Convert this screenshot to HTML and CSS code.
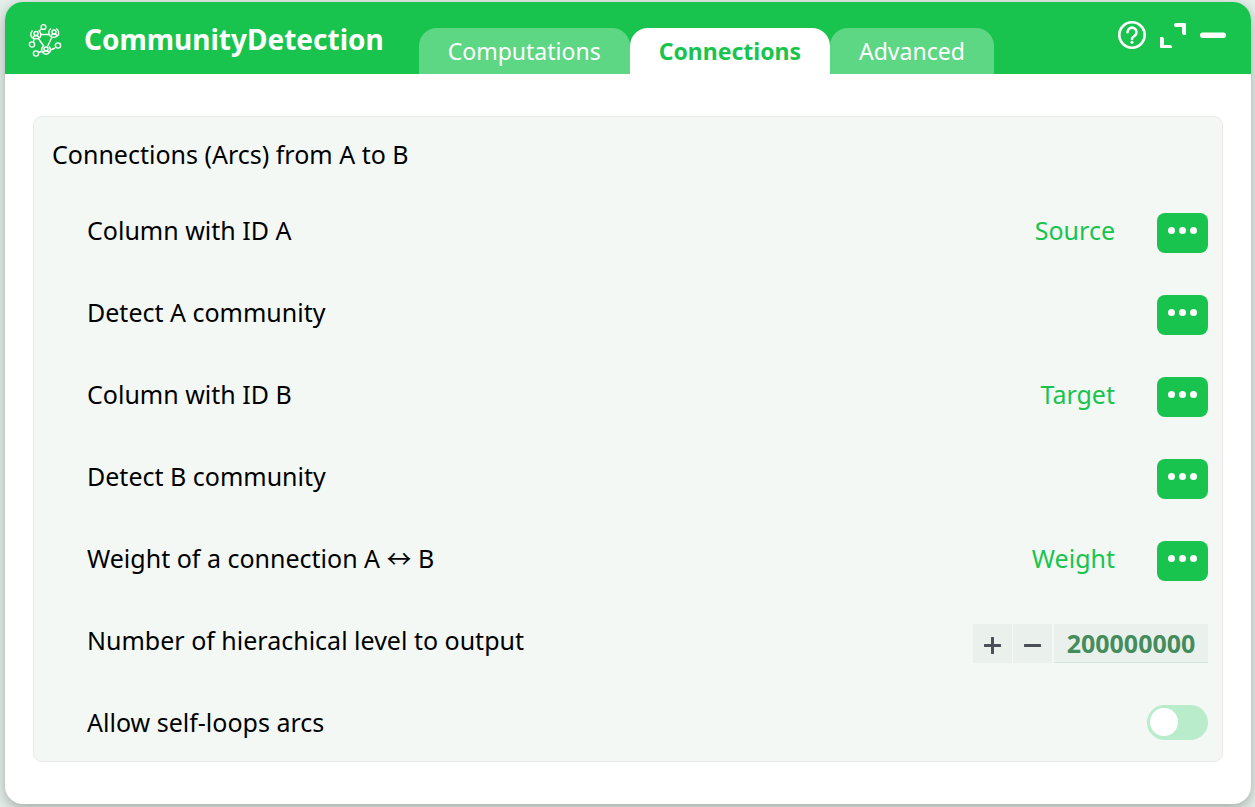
FILE: index.html
```html
<!DOCTYPE html>
<html lang="en">
  <head>
    <meta charset="UTF-8" />
    <meta name="viewport" content="width=device-width, initial-scale=1.0" />
    <title>CommunityDetection</title>
    <link rel="stylesheet" href="styles.css">
  </head>
  <body>
    <main class="window">
      <header class="header">
        <svg class="logo" viewBox="0 0 34 34" aria-hidden="true">
          <path d="M12 11.500H21M10 15L16 23.500M24 14L19.500 23.500M11.500 7.500L13.500 6M6.500 15L5.500 18.500M10.500 29.500L13.500 28.500M22.500 27L27 25" />
          <circle cx="15.500" cy="4" r="2.400" />
          <circle cx="4" cy="21.500" r="2.600" />
          <circle cx="8" cy="30.500" r="2.600" />
          <circle cx="30" cy="22.500" r="2.600" />
          <path d="M4.500 7.500A5 5 0 0 0 4.500 15M10.500 7.500A5 5 0 0 1 12 14.500M4.500 15Q8 17 12 14.500M5 14.500Q8 10.500 11 14.500" />
          <circle cx="8" cy="10.500" r="2" />
          <path d="M23 5.500A5 5 0 0 0 22 13M28 5.500A5 5 0 0 1 30 12.500M22 13Q26 16 30 12.500M23 12.500Q26 9 29 12.500" />
          <circle cx="26" cy="9" r="2" />
          <path d="M15 23.500A5 5 0 0 0 14 29M21 23.500A5 5 0 0 1 22 29M14 29Q18 33.500 22 29M15 29.500Q18 25.500 21 29.500" />
          <circle cx="18" cy="26" r="2" />
        </svg>
        <h1 class="title">CommunityDetection</h1>
        <nav class="tabs">
          <button type="button" class="tab">Computations</button>
          <button type="button" class="tab active">Connections</button>
          <button type="button" class="tab">Advanced</button>
        </nav>
        <div class="tools">
          <button type="button" class="tool" aria-label="Help">
            <svg width="28" height="28" viewBox="0 0 28 28">
              <circle cx="14" cy="14" r="12.700" fill="none" stroke="#fff" stroke-width="2.600" />
              <path d="M9.500 11.200a4.500 4.500 0 1 1 7 3.700c-1.600 1-2.500 1.500-2.500 3" fill="none" stroke="#fff" stroke-width="2.600" stroke-linecap="round" />
              <circle cx="14" cy="21.200" r="1.500" fill="#fff" />
            </svg>
          </button>
          <button type="button" class="tool" aria-label="Full screen">
            <svg width="26" height="26" viewBox="0 0 26 26" fill="#fff">
              <path d="M16 1H25a1 1 0 0 1 1 1V13H24a2 2 0 0 1-2-2V5H16a2 2 0 0 1 0-4Z" />
              <path d="M0 15H2a2 2 0 0 1 2 2V23h6a2 2 0 0 1 2 2v1H1a1 1 0 0 1-1-1Z" />
            </svg>
          </button>
          <button type="button" class="tool" aria-label="Minimize">
            <svg width="26" height="26" viewBox="0 0 26 26">
              <rect y="10.500" width="26" height="5.500" rx="2.700" fill="#fff" />
            </svg>
          </button>
        </div>
      </header>

      <section class="panel">
        <h2 class="panel-title">Connections (Arcs) from A to B</h2>
        <div class="rows">
          <div class="row">
            <span class="label">Column with ID A</span>
            <span class="value">Source</span>
            <button type="button" class="more" aria-label="Choose column with ID A"><i></i><i></i><i></i></button>
          </div>
          <div class="row">
            <span class="label">Detect A community</span>
            <button type="button" class="more" aria-label="Choose A community"><i></i><i></i><i></i></button>
          </div>
          <div class="row">
            <span class="label">Column with ID B</span>
            <span class="value">Target</span>
            <button type="button" class="more" aria-label="Choose column with ID B"><i></i><i></i><i></i></button>
          </div>
          <div class="row">
            <span class="label">Detect B community</span>
            <button type="button" class="more" aria-label="Choose B community"><i></i><i></i><i></i></button>
          </div>
          <div class="row">
            <span class="label">Weight of a connection A ↔ B</span>
            <span class="value">Weight</span>
            <button type="button" class="more" aria-label="Choose weight column"><i></i><i></i><i></i></button>
          </div>
          <div class="row">
            <label class="label" for="levels">Number of hierachical level to output</label>
            <div class="stepper">
              <button type="button" class="step" aria-label="Increase">
                <svg width="17" height="17" viewBox="0 0 17 17"><path d="M8.500 1V16M1 8.500H16" /></svg>
              </button>
              <button type="button" class="step" aria-label="Decrease">
                <svg width="17" height="17" viewBox="0 0 17 17"><path d="M1 8.500H16" /></svg>
              </button>
              <input class="number" id="levels" type="text" inputmode="numeric" value="200000000" />
            </div>
          </div>
          <div class="row">
            <label class="label" for="loops">Allow self-loops arcs</label>
            <input class="switch" id="loops" type="checkbox" role="switch" />
          </div>
        </div>
      </section>
    </main>
  </body>
</html>
```
FILE: styles.css
```css
* {
  box-sizing: border-box;
  margin: 0;
  padding: 0;
}
body {
  min-height: 100vh;
  display: flex;
  padding: 2px 4px 3px 5px;
  background-color: #e6f0ea;
  font-family: "Noto Sans", "Noto Sans CJK JP", sans-serif;
  font-size: 25px;
  line-height: 34px;
  color: #000;
}
button {
  border: none;
  font: inherit;
  cursor: pointer;
}
.window {
  flex: 1;
  background-color: #fff;
  border-radius: 18px;
  box-shadow: 0 4px 14px rgba(0, 0, 0, 0.3);
}

/* header */
.header {
  display: flex;
  height: 72px;
  padding: 0 25px 0 23px;
  background-color: #18c44d;
  border-radius: 18px 18px 0 0;
  color: #fff;
}
.logo {
  width: 34px;
  height: 34px;
  margin-top: 21px;
  fill: none;
  stroke: #fff;
  stroke-width: 1.4;
}
.title {
  margin: 19px 35px 0 22px;
  font-size: 28px;
  line-height: 36px;
}
.tabs {
  display: flex;
  align-items: flex-end;
}
.tab {
  height: 46px;
  padding: 0 29px;
  border-radius: 18px 18px 0 0;
  background-color: #5dd783;
  color: #fff;
  font-size: 23px;
}
.tab.active {
  background-color: #fff;
  color: #18c44d;
  font-weight: bold;
}
.tools {
  display: flex;
  align-items: center;
  gap: 14px;
  height: 28px;
  margin: 19px 0 0 auto;
}
.tool {
  display: flex;
  background: none;
}

/* settings */
.panel {
  margin: 42px 28px;
  padding: 20px 14px 16px 18px;
  border: 1px solid #e8ebea;
  border-radius: 9px;
  background-color: #f3f8f5;
}
.panel-title {
  margin-bottom: 42px;
  font-size: 25px;
  font-weight: normal;
}
.rows {
  display: flex;
  flex-direction: column;
  gap: 42px;
  padding-left: 35px;
}
.row {
  display: flex;
  align-items: flex-start;
  height: 40px;
}
.label {
  flex: 1;
}
.value {
  margin-right: 42px;
  color: #18c44d;
}
.more {
  display: flex;
  justify-content: center;
  gap: 4px;
  width: 51px;
  height: 40px;
  padding-top: 14px;
  border-radius: 8px;
  background-color: #18c44d;
}
.more i {
  width: 7px;
  height: 7px;
  border-radius: 50%;
  background-color: #fff;
}

/* number field */
.stepper {
  display: flex;
  gap: 1px;
  margin-top: 1px;
}
.step {
  display: flex;
  align-items: center;
  justify-content: center;
  width: 39px;
  height: 39px;
  padding-top: 4px;
  background-color: #eaf1ed;
}
.step path {
  stroke: #495057;
  stroke-width: 3;
  stroke-linecap: round;
}
.number {
  width: 154px;
  height: 39px;
  margin-left: 1px;
  border: none;
  border-bottom: 1px solid #d3e6dc;
  background-color: #eaf1ed;
  color: #448c5c;
  font: bold 25px "Noto Sans", sans-serif;
  text-align: center;
}

/* switch */
.switch {
  appearance: none;
  width: 61px;
  height: 35px;
  padding: 3px;
  border-radius: 18px;
  background-color: #b9ecca;
  cursor: pointer;
}
.switch::before {
  content: "";
  display: block;
  width: 28px;
  height: 28px;
  border-radius: 50%;
  background-color: #fff;
}
.switch:checked {
  background-color: #18c44d;
}
.switch:checked::before {
  margin-left: 27px;
}
```
